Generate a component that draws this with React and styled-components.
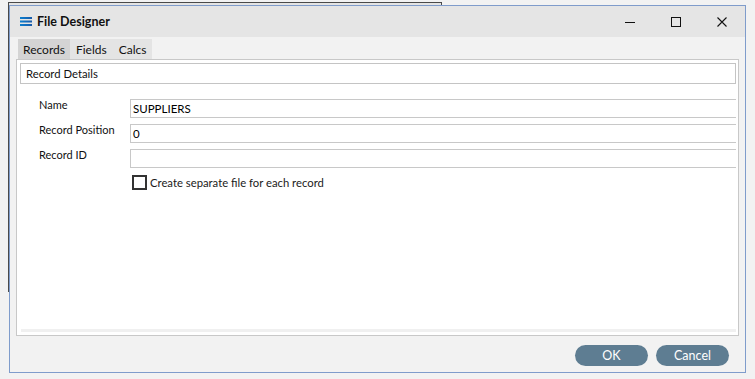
import React from 'react';
import styled, { createGlobalStyle } from 'styled-components';

const GlobalStyle = createGlobalStyle`
  html, body {
    margin: 0;
    padding: 0;
    background: #f2f2f2;
    font-family: Lato, "Open Sans", sans-serif;
    font-size: 12px;
    color: #1a1a1a;
  }
  #root {
    width: 755px;
    height: 379px;
    position: relative;
    overflow: hidden;
  }
`;

// Window behind the dialog (only its edge is visible)
const BackWindow = styled.div`
  position: absolute;
  left: 8px;
  top: 2px;
  width: 432px;
  height: 289px;
  border-top: 1px solid #4a4a4a;
  border-left: 1px solid #4a4a4a;
  border-right: 1px solid #4a4a4a;
  background: #e4e4e4;
`;

const Dialog = styled.div`
  position: absolute;
  left: 9px;
  top: 5px;
  width: 735px;
  height: 366px;
  border: 1px solid #7f9ccb;
  background: #f2f2f2;
  display: flex;
  flex-direction: column;
`;

const TitleBar = styled.div`
  height: 31px;
  background: #e5e5e5;
  display: flex;
  align-items: center;
  padding-left: 10px;
`;

const Title = styled.div`
  font-weight: bold;
  font-size: 12.5px;
  margin-left: 5px;
  flex: 1;
  color: #111;
`;

const Controls = styled.div`
  display: flex;
  height: 100%;
`;

const ControlButton = styled.div`
  width: 46px;
  height: 100%;
  display: flex;
  align-items: center;
  justify-content: center;
`;

const Body = styled.div`
  flex: 1;
  display: flex;
  flex-direction: column;
  padding: 2px 6px 0 6px;
`;

const TabStrip = styled.div`
  display: flex;
  padding-left: 2px;
  height: 20px;
`;

const Tab = styled.div`
  padding: 0 ${p => (p.$active ? '5px' : '6px')};
  display: flex;
  align-items: center;
  background: ${p => (p.$active ? '#d4d4d4' : '#e4e4e4')};
  color: #111;
`;

const Panel = styled.div`
  height: 272px;
  background: #fff;
  border: 1px solid #c8c8c8;
  padding: 3px 2px 0 3px;
  display: flex;
  flex-direction: column;
`;

const SectionHeader = styled.div`
  height: 19px;
  border: 1px solid #c4c4c4;
  display: flex;
  align-items: center;
  padding-left: 5px;
  font-size: 11.3px;
  color: #111;
`;

const Form = styled.div`
  flex: 1;
  padding: 15px 0 0 19px;
  display: flex;
  flex-direction: column;
  gap: 6px;
`;

const Row = styled.div`
  display: grid;
  grid-template-columns: 91px 1fr;
  height: 19px;
`;

const Label = styled.div`
  margin-top: -2px;
  font-size: 11px;
  line-height: 16px;
  color: #111;
`;

const Field = styled.div`
  border: 1px solid #c8c8c8;
  border-right: none;
  display: flex;
  align-items: center;
  padding-left: 2px;
  font-size: 11.5px;
  color: #000;
`;

const CheckRow = styled.div`
  display: flex;
  align-items: center;
  margin-left: 93px;
  margin-top: 1px;
  gap: 3px;
  font-size: 11.3px;
`;

const CheckBox = styled.div`
  width: 11px;
  height: 11px;
  border: 2px solid #333;
`;

const ScrollTrack = styled.div`
  height: 3px;
  background: #f0f0f0;
  margin: 0 0 3px 1px;
`;

const Footer = styled.div`
  display: flex;
  justify-content: flex-end;
  gap: 8px;
  padding: 9px 10px 0 0;
`;

const Button = styled.div`
  width: 73px;
  height: 21px;
  border-radius: 11px;
  background: #5e7d92;
  color: #fff;
  display: flex;
  align-items: center;
  justify-content: center;
  font-size: 12.5px;
`;

const MenuIcon = () => (
  <svg width="12" height="9" viewBox="0 0 12 9">
    <defs>
      <linearGradient id="mg" x1="0" x2="1" y1="0" y2="0">
        <stop offset="0" stopColor="#0a7fd0" />
        <stop offset="1" stopColor="#1a5aa8" />
      </linearGradient>
    </defs>
    <rect x="0" y="0" width="12" height="2" fill="url(#mg)" />
    <rect x="0" y="3.5" width="12" height="2" fill="url(#mg)" />
    <rect x="0" y="7" width="12" height="2" fill="url(#mg)" />
  </svg>
);

export default function App() {
  return (
    <>
      <GlobalStyle />
      <BackWindow />
      <Dialog>
        <TitleBar>
          <MenuIcon />
          <Title>File Designer</Title>
          <Controls>
            <ControlButton>
              <svg width="10" height="10" viewBox="0 0 10 10">
                <line x1="0" y1="5.5" x2="10" y2="5.5" stroke="#111" strokeWidth="1" />
              </svg>
            </ControlButton>
            <ControlButton>
              <svg width="10" height="10" viewBox="0 0 10 10">
                <rect x="0.5" y="0.5" width="9" height="9" fill="none" stroke="#111" strokeWidth="1" />
              </svg>
            </ControlButton>
            <ControlButton>
              <svg width="10" height="10" viewBox="0 0 10 10">
                <path d="M0.5 0.5 L9.5 9.5 M9.5 0.5 L0.5 9.5" stroke="#111" strokeWidth="1.1" />
              </svg>
            </ControlButton>
          </Controls>
        </TitleBar>
        <Body>
          <TabStrip>
            <Tab $active>Records</Tab>
            <Tab>Fields</Tab>
            <Tab>Calcs</Tab>
          </TabStrip>
          <Panel>
            <SectionHeader>Record Details</SectionHeader>
            <Form>
              <Row>
                <Label>Name</Label>
                <Field>SUPPLIERS</Field>
              </Row>
              <Row>
                <Label>Record Position</Label>
                <Field>0</Field>
              </Row>
              <Row>
                <Label>Record ID</Label>
                <Field />
              </Row>
              <CheckRow>
                <CheckBox />
                <span>Create separate file for each record</span>
              </CheckRow>
            </Form>
            <ScrollTrack />
          </Panel>
          <Footer>
            <Button>OK</Button>
            <Button>Cancel</Button>
          </Footer>
        </Body>
      </Dialog>
    </>
  );
}
